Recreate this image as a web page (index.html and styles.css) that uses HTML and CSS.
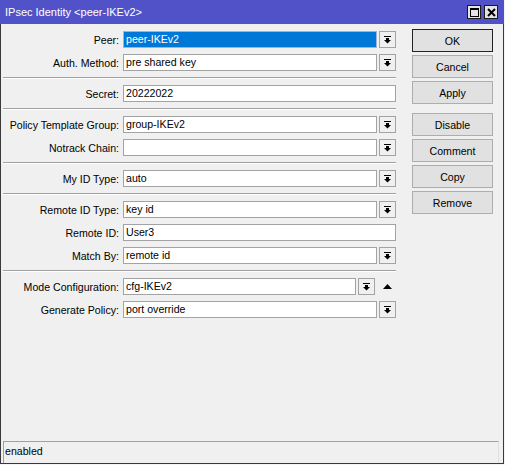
FILE: index.html
```html
<!DOCTYPE html>
<html>
<head>
<meta charset="utf-8">
<link rel="stylesheet" href="styles.css">
</head>
<body>
<div class="window">
  <div class="titlebar">
    <span class="title">IPsec Identity &lt;peer-IKEv2&gt;</span>
    <div class="tbtns">
      <span class="tb"><svg width="9" height="9" viewBox="0 0 9 9"><rect x="0.5" y="0.5" width="8" height="8" fill="none" stroke="#000"/><rect x="0" y="0" width="9" height="2" fill="#000"/></svg></span>
      <span class="tb"><svg width="9" height="9" viewBox="0 0 9 9"><path d="M1 1 L8 8 M8 1 L1 8" stroke="#000" stroke-width="2"/></svg></span>
    </div>
  </div>
  <div class="content">
    <div class="form">
      <div class="row"><label class="lbl">Peer:</label><div class="field"><div class="inp sel">peer-IKEv2</div><span class="dd"><svg width="7" height="8" viewBox="0 0 7 8"><rect x="0" y="0" width="7" height="1" fill="#000"/><rect x="2" y="2" width="3" height="2" fill="#000"/><polygon points="0,4 7,4 3.5,7.5" fill="#000"/></svg></span></div></div>
      <div class="row"><label class="lbl">Auth. Method:</label><div class="field"><div class="inp">pre shared key</div><span class="dd"><svg width="7" height="8" viewBox="0 0 7 8"><rect x="0" y="0" width="7" height="1" fill="#000"/><rect x="2" y="2" width="3" height="2" fill="#000"/><polygon points="0,4 7,4 3.5,7.5" fill="#000"/></svg></span></div></div>
      <div class="sep"></div>
      <div class="row"><label class="lbl">Secret:</label><div class="field"><div class="inp">20222022</div></div></div>
      <div class="sep"></div>
      <div class="row"><label class="lbl">Policy Template Group:</label><div class="field"><div class="inp">group-IKEv2</div><span class="dd"><svg width="7" height="8" viewBox="0 0 7 8"><rect x="0" y="0" width="7" height="1" fill="#000"/><rect x="2" y="2" width="3" height="2" fill="#000"/><polygon points="0,4 7,4 3.5,7.5" fill="#000"/></svg></span></div></div>
      <div class="row"><label class="lbl">Notrack Chain:</label><div class="field"><div class="inp"></div><span class="dd"><svg width="7" height="8" viewBox="0 0 7 8"><rect x="0" y="0" width="7" height="1" fill="#000"/><rect x="2" y="2" width="3" height="2" fill="#000"/><polygon points="0,4 7,4 3.5,7.5" fill="#000"/></svg></span></div></div>
      <div class="sep"></div>
      <div class="row"><label class="lbl">My ID Type:</label><div class="field"><div class="inp">auto</div><span class="dd"><svg width="7" height="8" viewBox="0 0 7 8"><rect x="0" y="0" width="7" height="1" fill="#000"/><rect x="2" y="2" width="3" height="2" fill="#000"/><polygon points="0,4 7,4 3.5,7.5" fill="#000"/></svg></span></div></div>
      <div class="sep"></div>
      <div class="row"><label class="lbl">Remote ID Type:</label><div class="field"><div class="inp">key id</div><span class="dd"><svg width="7" height="8" viewBox="0 0 7 8"><rect x="0" y="0" width="7" height="1" fill="#000"/><rect x="2" y="2" width="3" height="2" fill="#000"/><polygon points="0,4 7,4 3.5,7.5" fill="#000"/></svg></span></div></div>
      <div class="row"><label class="lbl">Remote ID:</label><div class="field"><div class="inp">User3</div></div></div>
      <div class="row"><label class="lbl">Match By:</label><div class="field"><div class="inp">remote id</div><span class="dd"><svg width="7" height="8" viewBox="0 0 7 8"><rect x="0" y="0" width="7" height="1" fill="#000"/><rect x="2" y="2" width="3" height="2" fill="#000"/><polygon points="0,4 7,4 3.5,7.5" fill="#000"/></svg></span></div></div>
      <div class="sep"></div>
      <div class="row"><label class="lbl">Mode Configuration:</label><div class="field"><div class="inp">cfg-IKEv2</div><span class="dd"><svg width="7" height="8" viewBox="0 0 7 8"><rect x="0" y="0" width="7" height="1" fill="#000"/><rect x="2" y="2" width="3" height="2" fill="#000"/><polygon points="0,4 7,4 3.5,7.5" fill="#000"/></svg></span><span class="up"><svg width="9" height="5" viewBox="0 0 9 5"><polygon points="0,5 9,5 4.5,0" fill="#000"/></svg></span></div></div>
      <div class="row"><label class="lbl">Generate Policy:</label><div class="field"><div class="inp">port override</div><span class="dd"><svg width="7" height="8" viewBox="0 0 7 8"><rect x="0" y="0" width="7" height="1" fill="#000"/><rect x="2" y="2" width="3" height="2" fill="#000"/><polygon points="0,4 7,4 3.5,7.5" fill="#000"/></svg></span></div></div>
    </div>
    <div class="buttons">
      <div class="btn default">OK</div>
      <div class="btn">Cancel</div>
      <div class="btn">Apply</div>
      <div class="btn gap">Disable</div>
      <div class="btn">Comment</div>
      <div class="btn">Copy</div>
      <div class="btn">Remove</div>
    </div>
  </div>
  <div class="status">enabled</div>
</div>
</body>
</html>
```

FILE: styles.css
```css
* { box-sizing: border-box; }
html, body { margin: 0; padding: 0; background: #f4f4f4; }
body {
  font-family: "Liberation Sans", Arial, sans-serif;
  font-size: 10.6px;
  color: #000;
}
.window {
  width: 504px;
  height: 464px;
  background: #f0f0f0;
  border: 1px solid #3a3a3a;
  border-top: none;
  display: flex;
  flex-direction: column;
}
.titlebar {
  height: 24px;
  margin: 0 -1px;
  background: #5252c8;
  color: #fff;
  display: flex;
  align-items: center;
  justify-content: space-between;
  padding: 0 6px 0 5px;
  font-size: 11px;
}
.tbtns { display: flex; gap: 3px; }
.tb {
  width: 14px;
  height: 14px;
  background: #e4e4e4;
  border: 1px solid #1a1a1a;
  display: flex;
  align-items: center;
  justify-content: center;
}
.content {
  flex: 1;
  display: flex;
  padding: 7px 0 0 2px;
  gap: 16px;
}
.form {
  width: 393px;
  display: flex;
  flex-direction: column;
  gap: 6px;
}
.row {
  display: flex;
  align-items: center;
  height: 17px;
}
.lbl {
  width: 117px;
  text-align: right;
  padding-right: 1px;
  white-space: nowrap;
}
.field {
  flex: 1;
  margin-left: 3px;
  display: flex;
  gap: 2px;
  height: 17px;
}
.inp {
  flex: 1;
  height: 17px;
  background: #fff;
  border: 1px solid #a3a3a3;
  padding: 0 2px;
  line-height: 15px;
  white-space: nowrap;
  overflow: hidden;
}
.inp.sel {
  background: #0078d7;
  color: #fff;
  border-color: #9ab7d8;
}
.dd {
  width: 17px;
  height: 17px;
  border: 1px solid #a3a3a3;
  background: #f0f0f0;
  display: flex;
  align-items: center;
  justify-content: center;
}
.up {
  width: 17px;
  display: flex;
  align-items: center;
  justify-content: center;
  margin-left: 2px;
}
.sep {
  height: 2px;
  border-top: 1px solid #a0a0a0;
  border-bottom: 1px solid #ffffff;
}
.buttons {
  width: 81px;
  display: flex;
  flex-direction: column;
  gap: 3px;
  margin-top: -2px;
}
.btn {
  height: 23px;
  background: #e1e1e1;
  border: 1px solid #adadad;
  display: flex;
  align-items: center;
  justify-content: center;
}
.btn.default { border-color: #222; }
.btn.gap { margin-top: 6px; }
.status {
  height: 22px;
  margin: 0 4px 0 2px;
  border-top: 1px solid #a0a0a0;
  border-left: 1px solid #a0a0a0;
  border-right: 1px solid #e0e0e0;
  padding-left: 1px;
  line-height: 19px;
}
```
